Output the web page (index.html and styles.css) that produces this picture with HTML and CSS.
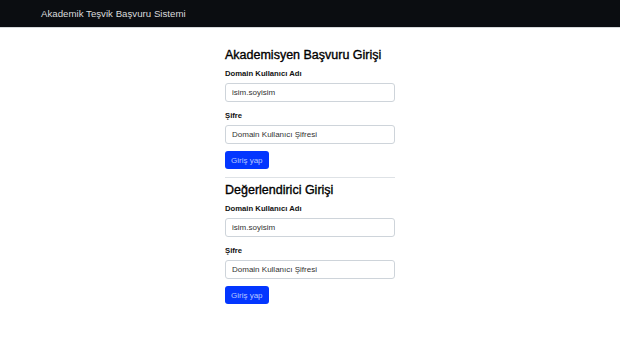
FILE: index.html
```html
<!DOCTYPE html>
<html>
  <head>
    <meta charset="utf-8">
    <title>Akademik Teşvik Başvuru Sistemi</title>
    <link rel="stylesheet" href="styles.css">
  </head>
  <body>
    <nav class="navbar">
      <span class="brand">Akademik Teşvik Başvuru Sistemi</span>
    </nav>

    <main class="container">
      <form class="login-form">
        <h2>Akademisyen Başvuru Girişi</h2>
        <label for="user1" class="form-label">Domain Kullanıcı Adı</label>
        <input type="text" id="user1" class="form-control" placeholder="isim.soyisim">
        <label for="pass1" class="form-label">Şifre</label>
        <input type="password" id="pass1" class="form-control" placeholder="Domain Kullanıcı Şifresi">
        <button type="button" class="btn">Giriş yap</button>
      </form>

      <hr class="divider">

      <form class="login-form">
        <h2>Değerlendirici Girişi</h2>
        <label for="user2" class="form-label">Domain Kullanıcı Adı</label>
        <input type="text" id="user2" class="form-control" placeholder="isim.soyisim">
        <label for="pass2" class="form-label">Şifre</label>
        <input type="password" id="pass2" class="form-control" placeholder="Domain Kullanıcı Şifresi">
        <button type="button" class="btn">Giriş yap</button>
      </form>
    </main>
  </body>
</html>
```

FILE: styles.css
```css
body {
  margin: 0;
  font-family: "Liberation Sans", Arial, sans-serif;
  background: #fff;
  color: #212529;
}

.navbar {
  height: 27px;
  background-color: #0b0d11;
  border-bottom: 1px solid #d6d8db;
  display: flex;
  align-items: center;
  padding-left: 41px;
}

.brand {
  color: #d8dadc;
  font-size: 9.7px;
}

.container {
  width: 170px;
  margin: 0 auto;
  padding-top: 20px;
}

.login-form {
  display: flex;
  flex-direction: column;
  align-items: flex-start;
}

h2 {
  margin: 0 0 5px 0;
  font-size: 12.5px;
  font-weight: 500;
  color: #000;
  -webkit-text-stroke: 0.35px #000;
}

.form-label {
  font-size: 7.7px;
  font-weight: bold;
  margin: 2px 0 5px 0;
  color: #111;
}

.form-control {
  box-sizing: border-box;
  width: 100%;
  height: 19px;
  margin: 0 0 7px 0;
  padding: 0 6px;
  border: 1px solid #ced4da;
  border-radius: 3px;
  font-family: inherit;
  font-size: 8px;
  color: #212529;
}

.form-control::placeholder {
  color: #333;
}

.btn {
  height: 18px;
  padding: 0 6px;
  border: none;
  border-radius: 3px;
  background-color: #0336ff;
  color: #b9c8ff;
  font-family: inherit;
  font-size: 8px;
  cursor: pointer;
}

.divider {
  border: none;
  border-top: 1px solid #dee2e6;
  margin: 8px 0 5px 0;
}
```
